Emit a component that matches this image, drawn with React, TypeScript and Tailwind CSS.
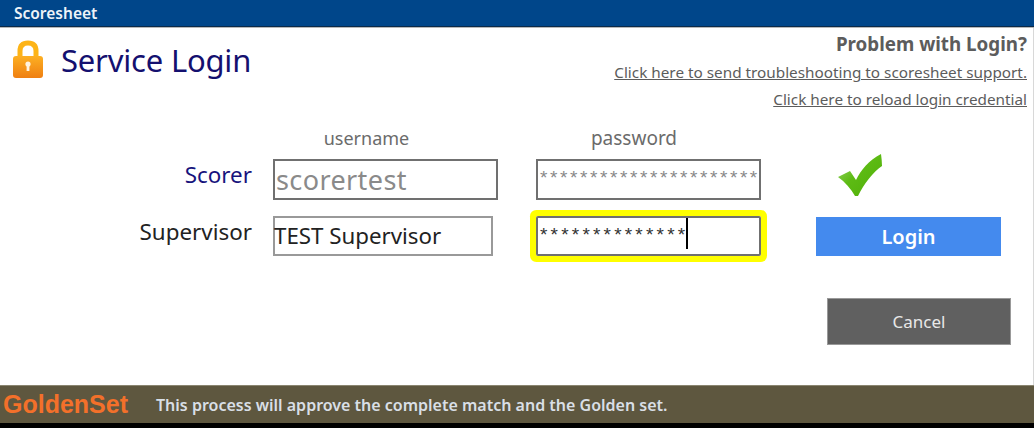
import React from "react";

const LockIcon = () => (
  <svg width="34" height="42" viewBox="0 0 34 42">
    <defs>
      <linearGradient id="lockBody" x1="0" y1="0" x2="0" y2="1">
        <stop offset="0" stopColor="#fdb022" />
        <stop offset="1" stopColor="#ef7f12" />
      </linearGradient>
    </defs>
    <path d="M9 18 V12 C9 6.5 12 4 17 4 C22 4 25 6.5 25 12 V18" fill="none" stroke="#fdb417" strokeWidth="5" />
    <rect x="2" y="17" width="30" height="22" rx="3" fill="url(#lockBody)" />
    <circle cx="17" cy="25" r="2.6" fill="#fff3df" />
    <rect x="15.6" y="25" width="2.8" height="7" fill="#fff3df" />
  </svg>
);

const CheckIcon = () => (
  <svg width="46" height="44" viewBox="0 0 46 44">
    <defs>
      <linearGradient id="checkFill" x1="0" y1="0" x2="1" y2="1">
        <stop offset="0" stopColor="#a5db7c" />
        <stop offset="0.45" stopColor="#5dbb14" />
        <stop offset="1" stopColor="#4fae08" />
      </linearGradient>
    </defs>
    <path d="M1 24 L13 18 L19 27 C24 17 32 7 44 1 C44.5 5 45 9 45 13 C36 19 27 31 21 43 L18 43 C14 36 8 29 1 24 Z" fill="url(#checkFill)" />
  </svg>
);

const App = () => {
  return (
    <div className="w-[1034px] h-[428px] flex flex-col bg-white overflow-hidden font-['Noto_Sans',sans-serif]">
      <div className="h-[27px] shrink-0 bg-[#00468a] border-b border-b-[#0a2a4a] flex items-center px-[14px] pt-[2px]">
        <span className="text-[15.5px] font-semibold text-[#eef3f8]">Scoresheet</span>
      </div>
      <div className="h-[1px] shrink-0 bg-[#b8b8b8]" />

      <div className="flex-1 flex flex-col border-r border-r-[#d8d8d8] min-h-0">
        <div className="flex justify-between pl-[11px] pr-[6px]">
          <div className="flex items-center gap-[16px] h-[64px]">
            <LockIcon />
            <h1 className="text-[31px] leading-none font-normal text-[#14106f] tracking-[-0.2px]">Service Login</h1>
          </div>
          <div className="flex flex-col items-end pt-[6px] text-[#5c5c5c]">
            <span className="text-[18.8px] leading-[20px] font-bold">Problem with Login?</span>
            <a className="text-[15.3px] leading-[20px] mt-[8px] underline">Click here to send troubleshooting to scoresheet support.</a>
            <a className="text-[15.3px] leading-[20px] mt-[7px] underline">Click here to reload login credential</a>
          </div>
        </div>

        <div className="flex mt-[15px]">
          <div className="w-[273px] flex flex-col items-end pr-[21px] pt-[36px] text-[22.4px] leading-[30px]">
            <span className="text-[#17137c]">Scorer</span>
            <span className="text-[#222222] mt-[27px]">Supervisor</span>
          </div>

          <div className="w-[263px] flex flex-col">
            <span className="w-[187px] text-center text-[18px] leading-[24px] text-[#6b6b6b] mt-[2px]">username</span>
            <div className="w-[225px] h-[41px] mt-[9px] border-2 border-[#707070] text-[27px] leading-[37px] pl-[1px] text-[#8a8a8a] tracking-[0.4px]">scorertest</div>
            <div className="w-[220px] h-[40px] mt-[16px] border-2 border-[#999999] text-[22.3px] leading-[36px] text-[#222222] -indent-[1px]">TEST Supervisor</div>
          </div>

          <div className="w-[280px] flex flex-col">
            <span className="w-[196px] text-center text-[19px] leading-[24px] text-[#6b6b6b] mt-[2px]">password</span>
            <div className="w-[225px] h-[41px] mt-[9px] border-2 border-[#707070] text-[19px] leading-[34px] pl-[2px] text-[#8a8a8a] font-['Liberation_Sans',sans-serif] overflow-hidden whitespace-nowrap tracking-[2.6px]">**********************</div>
            <div className="w-[225px] h-[40px] mt-[16px] border-2 border-[#707070] rounded-[2px] ring-[6px] ring-[#ffff00] text-[19px] leading-[34px] pl-[2px] text-[#333333] font-['Liberation_Sans',sans-serif] whitespace-nowrap tracking-[3.2px] flex items-start">
              <span>**************</span>
              <span className="w-[2px] h-[31px] -ml-[2px] bg-black" />
            </div>
          </div>

          <div className="flex flex-col w-[185px]">
            <div className="ml-[21px] mt-[29px]"><CheckIcon /></div>
            <button className="w-[185px] h-[39px] mt-[20px] bg-[#448aee] text-white text-[20px] font-semibold">Login</button>
          </div>
        </div>

        <div className="flex justify-end pr-[22px] mt-[42px]">
          <button className="w-[184px] h-[47px] bg-[#606060] border border-[#999999] text-[#e8e8e8] text-[17px]">Cancel</button>
        </div>
      </div>

      <div className="h-[38px] shrink-0 bg-[#5e573f] border-t border-t-[#8a8570] flex items-center px-[3px]">
        <span className="w-[153px] text-[25px] font-bold text-[#f3702a] font-['Liberation_Sans',sans-serif]">GoldenSet</span>
        <span className="text-[16px] font-semibold text-[#d9dfe6]">This process will approve the complete match and the Golden set.</span>
      </div>
      <div className="h-[5px] shrink-0 bg-black" />
    </div>
  );
};

export default App;
